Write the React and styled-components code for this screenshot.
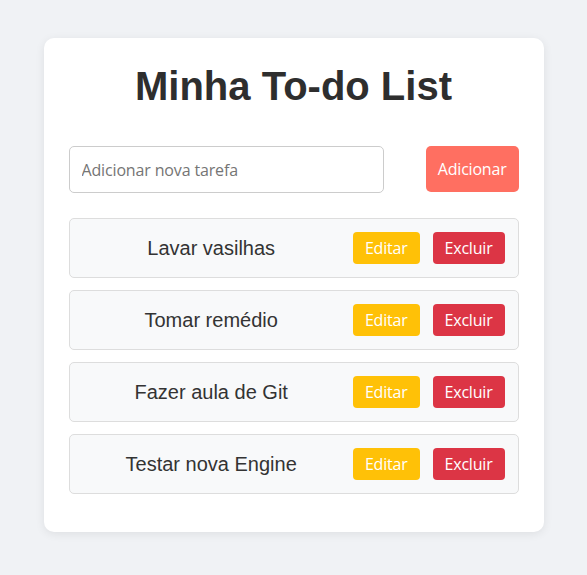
import { useState } from "react";
import styled, { createGlobalStyle } from "styled-components";

const GlobalStyle = createGlobalStyle`
    body{
        margin: 0;
        background: #f0f2f5;
        font-family: "Liberation Sans", Arial, sans-serif;
    }
    *{
        box-sizing: border-box;
    }
`

function App() {
    const [tasks, setTasks] = useState([
        'Lavar vasilhas',
        'Tomar remédio',
        'Fazer aula de Git',
        'Testar nova Engine',
    ]);

    const [newTask, setNewTask] = useState('');

    function handleAdd() {
        if (!newTask.trim()) return;
        setTasks(old => [...old, newTask]);
        setNewTask('');
    }

    function handleDelete(index) {
        setTasks(old => old.filter((_, i) => i !== index));
    }

    return (
        <>
            <GlobalStyle />
            <Card>
                <Title>Minha To-do List</Title>
                <Form onSubmit={(e) => { e.preventDefault(); handleAdd(); }}>
                    <Field
                        type='text'
                        placeholder='Adicionar nova tarefa'
                        value={newTask}
                        onChange={(e) => setNewTask(e.target.value)}
                    />
                    <AddButton type='submit'>Adicionar</AddButton>
                </Form>
                <List>
                    {tasks.map((task, index) => (
                        <Task key={task + index}>
                            <TaskName>{task}</TaskName>
                            <ActionButton $variant='edit'>Editar</ActionButton>
                            <ActionButton $variant='delete' onClick={() => handleDelete(index)}>Excluir</ActionButton>
                        </Task>
                    ))}
                </List>
            </Card>
        </>
    )
}

export default App

const Card = styled.div`
    width: 500px;
    margin: 38px auto;
    background: white;
    border-radius: 10px;
    box-shadow: 0 2px 10px rgba(0, 0, 0, 0.08);
    padding: 26px 25px 38px;
`

const Title = styled.h1`
    margin: 0 0 37px;
    line-height: 45px;
    text-align: center;
    font-size: 40px;
    font-weight: bold;
    color: #2e2e2e;
`

const Form = styled.form`
    display: flex;
    justify-content: space-between;
    align-items: flex-start;
    margin-bottom: 25px;
`

const Field = styled.input`
    width: 70%;
    height: 47px;
    padding: 0 12px;
    font-size: 16px;
    font-family: "Open Sans", sans-serif;
    letter-spacing: -0.15px;
    border: 1px solid #ccc;
    border-radius: 5px;
    outline: none;
    color: #333;
    &::placeholder{
        color: #757575;
    }
`

const AddButton = styled.button`
    height: 46px;
    padding: 0 12px;
    font-size: 16px;
    font-family: "Open Sans", sans-serif;
    letter-spacing: -0.2px;
    background: #ff6f61;
    color: white;
    border: none;
    border-radius: 5px;
    cursor: pointer;
    &:hover{
        opacity: 0.9;
    }
`

const List = styled.ul`
    list-style: none;
    margin: 0;
    padding: 0;
    display: flex;
    flex-direction: column;
    gap: 12px;
`

const Task = styled.li`
    display: flex;
    align-items: center;
    gap: 13px;
    padding: 13px;
    background: #f8f9fa;
    border: 1px solid #ddd;
    border-radius: 5px;
`

const TaskName = styled.span`
    flex: 1;
    text-align: center;
    font-size: 20px;
    color: #333;
`

const ActionButton = styled.button`
    height: 32px;
    padding: 0 12px;
    font-size: 16px;
    font-family: "Open Sans", sans-serif;
    letter-spacing: -0.2px;
    color: white;
    border: none;
    border-radius: 4px;
    cursor: pointer;
    background: ${props => props.$variant === 'edit' ? '#ffc107' : '#dc3545'};
    &:hover{
        opacity: 0.9;
    }
`
